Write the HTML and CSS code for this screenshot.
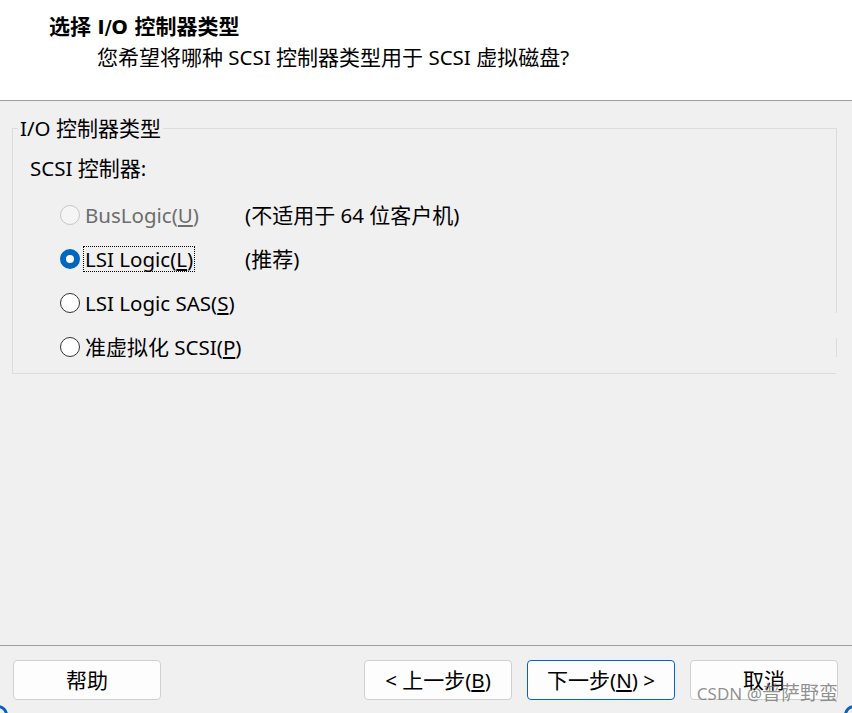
FILE: index.html
```html
<!DOCTYPE html>
<html lang="zh-CN">
<head>
<meta charset="utf-8">
<title>选择 I/O 控制器类型</title>
<link rel="stylesheet" href="styles.css">
</head>
<body>
<div class="dialog">
  <header class="header">
    <div class="title"><span class="zh">选择</span> I/O <span class="zh">控制器类型</span></div>
    <div class="subtitle"><span class="zh">您希望将哪种</span> SCSI <span class="zh">控制器类型用于</span> SCSI <span class="zh">虚拟磁盘</span>?</div>
  </header>
  <main class="main">
    <fieldset class="group">
      <legend class="legend">I/O <span class="zh">控制器类型</span></legend>
      <div class="group-label">SCSI <span class="zh">控制器</span>:</div>
      <div class="options">
        <div class="opt disabled"><span class="radio"></span><span class="text">BusLogic(<u>U</u>)</span></div>
        <div class="note">(<span class="zh">不适用于</span> 64 <span class="zh">位客户机</span>)</div>
        <div class="opt"><span class="radio checked"></span><span class="text focus">LSI Logic(<u>L</u>)</span></div>
        <div class="note">(<span class="zh">推荐</span>)</div>
        <div class="opt"><span class="radio"></span><span class="text">LSI Logic SAS(<u>S</u>)</span></div>
        <div class="note"></div>
        <div class="opt"><span class="radio"></span><span class="text"><span class="zh">准虚拟化</span> SCSI(<u>P</u>)</span></div>
        <div class="note"></div>
      </div>
      <span class="gap gap1"></span>
      <span class="gap gap2"></span>
    </fieldset>
  </main>
  <footer class="footer">
    <button class="btn"><span class="zh">帮助</span></button>
    <div class="spacer"></div>
    <button class="btn">&lt; <span class="zh">上一步</span>(<u>B</u>)</button>
    <button class="btn primary"><span class="zh">下一步</span>(<u>N</u>) &gt;</button>
    <button class="btn"><span class="zh">取消</span></button>
  </footer>
  <div class="watermark">CSDN @<span class="zh">普萨野蛮</span></div>
  <span class="corner corner-left"></span>
  <span class="corner corner-right"></span>
</div>
</body>
</html>
```

FILE: styles.css
```css
html, body {
  margin: 0;
  padding: 0;
}
body {
  width: 852px;
  height: 713px;
  overflow: hidden;
  font-family: "Noto Sans", "Noto Sans CJK SC", sans-serif;
  font-size: 20.5px;
  color: #000;
  background: #f0f0f0;
}
.zh {
  font-family: "Noto Sans CJK SC", sans-serif;
  font-size: 21px;
  line-height: 1;
}
.dialog {
  position: relative;
  width: 852px;
  height: 713px;
  display: flex;
  flex-direction: column;
  overflow: hidden;
}
.header {
  box-sizing: border-box;
  background: #fff;
  border-bottom: 1px solid #a0a0a0;
  padding-top: 12px;
  flex: none;
  height: 101px;
}
.title {
  padding-left: 49px;
  line-height: 30px;
  font-weight: bold;
  font-family: "DejaVu Sans", "Noto Sans CJK SC", sans-serif;
  font-size: 19px;
}
.subtitle {
  padding-left: 97px;
  line-height: 30px;
}
.main {
  flex: 1;
  padding: 14px 15px 0 12px;
}
.group {
  position: relative;
  margin: 0;
  padding: 0 0 4px 5px;
  border: 1px solid #dcdcdc;
  min-width: 0;
}
.legend {
  padding: 0 2px;
  line-height: 26px;
}
.group-label {
  margin: 14px 0 0 12px;
  line-height: 26px;
}
.options {
  margin-top: 12px;
  display: grid;
  grid-template-columns: 227px auto;
  grid-auto-rows: 44px;
  align-items: center;
}
.opt {
  display: flex;
  align-items: center;
  padding-left: 42px;
}
.radio {
  width: 20px;
  height: 20px;
  box-sizing: border-box;
  border-radius: 50%;
  border: 1px solid #333;
  background: #fff;
  flex: none;
}
.radio.checked {
  border: 6px solid #0067c0;
  background: #fff;
}
.disabled .radio {
  border-color: #c6c6c6;
  background: #f5f5f5;
}
.disabled .text {
  color: #6d6d6d;
}
.text {
  margin-left: 3px;
  padding: 0 1px;
  line-height: 24px;
  border: 1px solid transparent;
  white-space: nowrap;
}
.text.focus {
  border: 1px dotted #000;
}
.note {
  white-space: nowrap;
  line-height: 24px;
}
.gap {
  position: absolute;
  right: -1px;
  width: 1px;
  background: #f0f0f0;
}
.gap1 { top: 172px; height: 25px; }
.gap2 { top: 216px; height: 25px; }
.footer {
  flex: none;
  height: 68px;
  box-sizing: border-box;
  border-top: 1px solid #a0a0a0;
  padding: 14px 14px 0 13px;
  display: flex;
  gap: 15px;
  align-items: flex-start;
}
.spacer {
  flex: 1;
}
.btn {
  width: 148px;
  height: 40px;
  box-sizing: border-box;
  background: #fdfdfd;
  border: 1px solid #d0d0d0;
  border-radius: 4px;
  font: inherit;
  color: #000;
  padding: 0;
  line-height: 26px;
}
.btn.primary {
  border-color: #0067c0;
}
.watermark {
  position: absolute;
  right: 14px;
  bottom: 7px;
  font-size: 17px;
  line-height: 24px;
  color: rgba(110, 110, 110, 0.75);
  white-space: nowrap;
}
.watermark .zh {
  font-size: 19px;
}
.corner {
  position: absolute;
  width: 20px;
  height: 20px;
  border-radius: 50%;
  border: 3px solid #0a5fc8;
  box-sizing: border-box;
}
.corner-left { left: -12px; bottom: -12px; }
.corner-right { right: -12px; bottom: -12px; }
```
